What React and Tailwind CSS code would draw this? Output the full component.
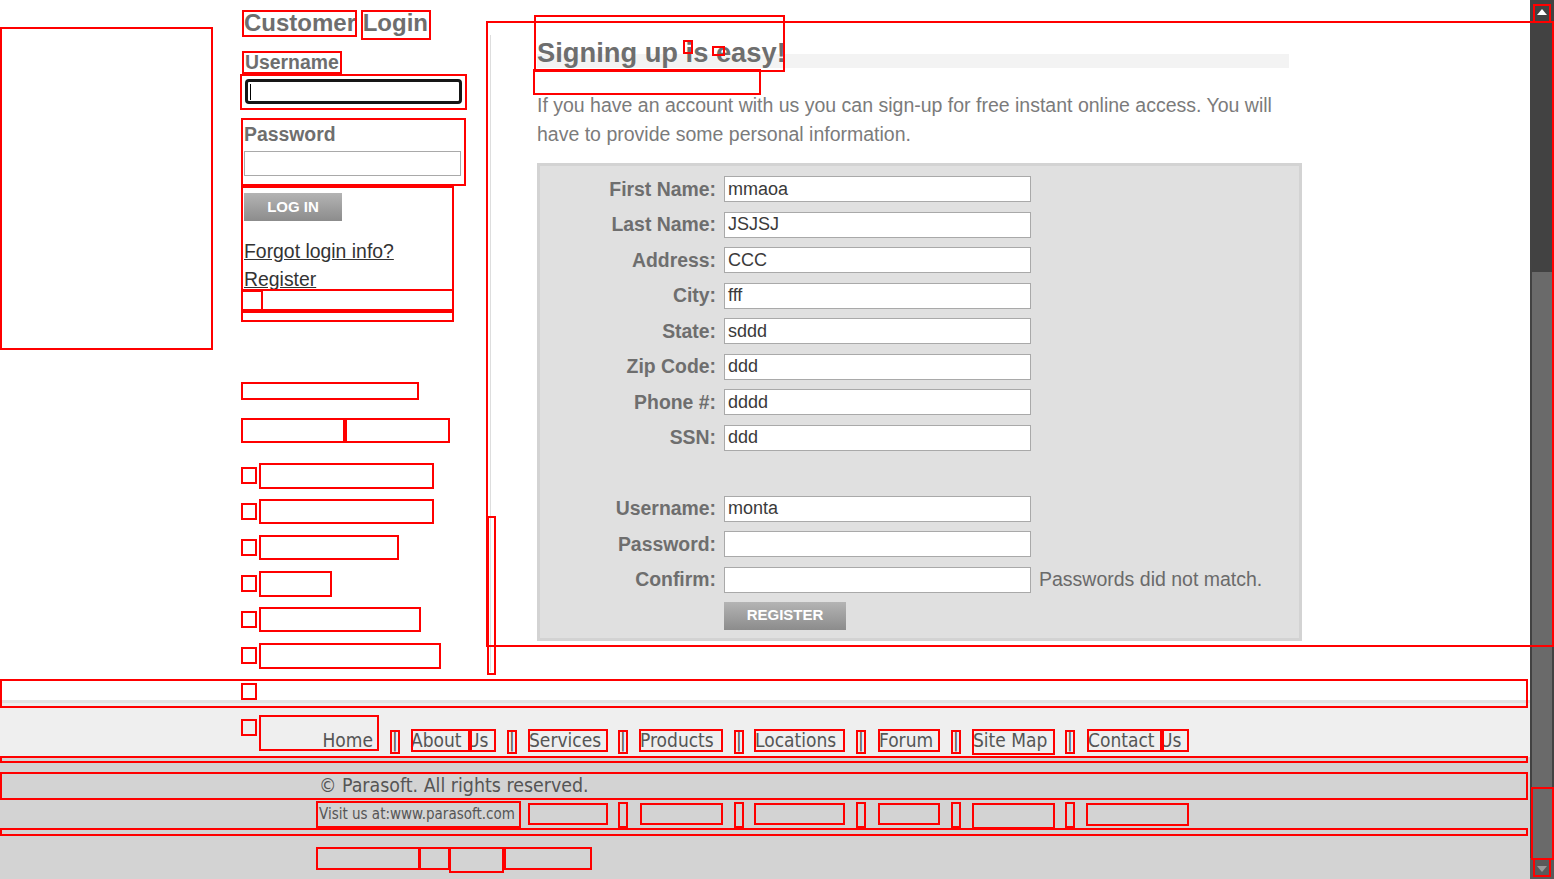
import React from 'react'

const SANS = "font-['Liberation_Sans',Arial,sans-serif]"
const FOOT = "font-['DejaVu_Sans_Condensed','DejaVu_Sans',sans-serif]"

const fields = [
  { label: 'First Name:', value: 'mmaoa' },
  { label: 'Last Name:', value: 'JSJSJ' },
  { label: 'Address:', value: 'CCC' },
  { label: 'City:', value: 'fff' },
  { label: 'State:', value: 'sddd' },
  { label: 'Zip Code:', value: 'ddd' },
  { label: 'Phone #:', value: 'dddd' },
  { label: 'SSN:', value: 'ddd' },
]

const accountFields = [
  { label: 'Username:', value: 'monta' },
  { label: 'Password:', value: '' },
  { label: 'Confirm:', value: '', error: 'Passwords did not match.' },
]

// each link sits after a "|" separator; widths keep the reference spacing
const navLinks = [
  { label: 'About Us', cls: 'ml-[12px] w-[97px]' },
  { label: 'Services', cls: 'ml-[13px] w-[90px]' },
  { label: 'Products', cls: 'ml-[13px] w-[95px]' },
  { label: 'Locations', cls: 'ml-[12px] w-[102px]' },
  { label: 'Forum', cls: 'ml-[14px] w-[73px]' },
  { label: 'Site Map', cls: 'ml-[13px] w-[93px]' },
  { label: 'Contact Us', cls: 'ml-[14px] w-[110px]' },
]

// debug outlines drawn over the page: [x1, y1, x2, y2]
const boxes = [
  [0, 27, 213, 350],
  [242, 10, 357, 37], [361, 10, 431, 40],
  [242, 51, 342, 74],
  [240, 74, 467, 110],
  [241, 118, 466, 186],
  [241, 186, 454, 322],
  [241, 289, 454, 311], [241, 290, 263, 313], [241, 311, 454, 322],
  [241, 382, 419, 400],
  [241, 418, 345, 443], [345, 418, 450, 443],
  [241, 467, 257, 484], [259, 463, 434, 489],
  [241, 503, 257, 520], [259, 499, 434, 524],
  [241, 539, 257, 556], [259, 535, 399, 560],
  [241, 575, 257, 592], [259, 571, 332, 597],
  [241, 611, 257, 628], [259, 607, 421, 632],
  [241, 647, 257, 664], [259, 643, 441, 669],
  [241, 683, 257, 700],
  [241, 719, 257, 736], [259, 715, 379, 751],
  [487, 516, 496, 675],
  [486, 21, 1554, 647],
  [534, 15, 785, 72], [683, 40, 693, 54], [712, 46, 725, 56],
  [533, 69, 761, 95],
  [0, 679, 1528, 708],
  [0, 756, 1528, 763],
  [0, 772, 1528, 800],
  [390, 730, 400, 754], [411, 729, 470, 752], [470, 729, 496, 752],
  [507, 730, 517, 754], [528, 729, 608, 752],
  [618, 730, 628, 754], [639, 729, 723, 752],
  [734, 730, 744, 754], [754, 729, 845, 752],
  [856, 730, 866, 754], [878, 729, 940, 752],
  [951, 730, 961, 754], [972, 729, 1055, 755],
  [1065, 730, 1075, 754], [1087, 729, 1162, 752], [1162, 729, 1189, 752],
  [316, 801, 521, 828], [528, 803, 608, 825],
  [618, 802, 628, 828], [640, 803, 723, 825],
  [734, 802, 744, 828], [754, 803, 845, 825],
  [856, 802, 866, 828], [878, 803, 940, 825],
  [951, 802, 961, 828], [972, 803, 1055, 829],
  [1065, 802, 1075, 828], [1086, 803, 1189, 826],
  [0, 828, 1528, 836],
  [316, 847, 420, 870], [419, 847, 450, 870], [449, 847, 504, 873], [504, 847, 592, 870],
  [1533, 4, 1551, 23], [1531, 787, 1554, 860], [1533, 858, 1551, 877],
]

function FormRow({ label, value, error }) {
  return (
    <div className="flex h-[35.5px] items-center">
      <label className="w-[176px] text-right text-[19.4px] font-bold text-[#6e6e6e]">{label}</label>
      <div className="ml-[8px] flex h-[26px] w-[307px] items-center border border-[#a9a9a9] bg-white pl-[3px] text-[18px] text-[#3a3a3a]">
        {value}
      </div>
      {error && <span className="ml-[8px] text-[19.5px] text-[#6a6a6a]">{error}</span>}
    </div>
  )
}

function Scrollbar() {
  return (
    <div className="flex h-[879px] w-[24px] shrink-0 flex-col bg-[#424242]">
      <div className="flex h-[24px] items-center justify-center">
        <svg width="12" height="8" viewBox="0 0 12 8"><polygon points="6,1 11,7 1,7" fill="#ffffff" /></svg>
      </div>
      <div className="h-[248px]" />
      <div className="mx-[2px] h-[586px] bg-[#6a6a6a]" />
      <div className="flex flex-1 items-center justify-center bg-[#5a5a5a]">
        <svg width="12" height="8" viewBox="0 0 12 8"><polygon points="1,1 11,1 6,7" fill="#9a9a9a" /></svg>
      </div>
    </div>
  )
}

export default function App() {
  return (
    <div className={`relative flex h-[879px] w-[1554px] overflow-hidden bg-white ${SANS}`}>
      <div className="flex w-[1530px] flex-col">
        <div className="flex h-[700px]">
          <div className="w-[244px] shrink-0" />

          <div className="w-[246px] shrink-0 pt-[10px]">
            <h2 className="text-[24px] font-bold leading-[26px] text-[#6e6e6e]">Customer Login</h2>
            <p className="ml-[1px] mt-[15px] text-[19.4px] font-bold leading-[22px] text-[#6e6e6e]">Username</p>
            <div className="ml-[1px] mt-[6px] flex h-[25px] w-[217px] items-center rounded-[4px] border-[3px] border-[#161616] bg-white pl-[2px]">
              <span className="h-[16px] w-[1px] bg-black" />
            </div>
            <p className="mt-[19px] text-[19.4px] font-bold leading-[22px] text-[#6e6e6e]">Password</p>
            <div className="mt-[6px] h-[25px] w-[217px] border border-[#a9a9a9] bg-white" />
            <button className="mt-[17px] flex h-[28px] w-[98px] items-center justify-center bg-gradient-to-b from-[#b4b4b4] to-[#8c8c8c] text-[15px] font-bold text-white">
              LOG IN
            </button>
            <div className="mt-[16px] text-[19.4px] leading-[28px] text-[#333333]">
              <a className="block underline">Forgot login info?</a>
              <a className="block underline">Register</a>
            </div>
          </div>

          <div className="mt-[35px] h-[637px] flex-1 border-l border-[#dddddd] pl-[46px] pt-[2px]">
            <h1 className="h-[31px] w-[752px] bg-[linear-gradient(to_bottom,transparent_17px,#f3f3f3_17px)] text-[27.3px] font-bold leading-[31px] text-[#6e6e6e]">
              Signing up is easy!
            </h1>
            <p className="mt-[22.5px] w-[752px] text-[19.5px] leading-[29px] text-[#7b7b7b]">
              If you have an account with us you can sign-up for free instant online access. You will have to provide some personal information.
            </p>
            <div className="mt-[14.5px] w-[765px] border-[3px] border-[#d3d3d3] bg-[#e0e0e0] pb-[8px] pt-[5.5px]">
              {fields.map((f) => (
                <FormRow key={f.label} {...f} />
              ))}
              <div className="h-[35.5px]" />
              {accountFields.map((f) => (
                <FormRow key={f.label} {...f} />
              ))}
              <button className="ml-[184px] mt-[4px] flex h-[28px] w-[122px] items-center justify-center bg-gradient-to-b from-[#b4b4b4] to-[#8c8c8c] text-[15px] font-bold text-white">
                REGISTER
              </button>
            </div>
          </div>
        </div>

        <footer className={`flex-1 border-t-[3px] border-[#e2e2e2] bg-[#d3d3d3] ${FOOT} text-[#555555]`}>
          <div className="h-[54px] bg-[#efefef] pl-[259px] pt-[26px]">
            <div className="flex h-[22px] items-center text-[19px] leading-[22px]">
              <span className="w-[132px] pr-[18px] text-right">Home</span>
              {navLinks.map((link) => (
                <React.Fragment key={link.label}>
                  <span className="w-[8px] text-center">|</span>
                  <span className={`shrink-0 ${link.cls}`}>{link.label}</span>
                </React.Fragment>
              ))}
            </div>
          </div>
          <p className="pl-[319px] pt-[15px] text-[19.4px] leading-[27px]">© Parasoft. All rights reserved.</p>
          <p className="mt-[3px] pl-[319px] text-[15px] leading-[24px]">Visit us at:www.parasoft.com</p>
        </footer>
      </div>

      <Scrollbar />

      <div className="pointer-events-none absolute inset-0">
        {boxes.map(([x1, y1, x2, y2], i) => (
          <div
            key={i}
            className="absolute border-2 border-[#ff0000]"
            style={{ left: x1, top: y1, width: x2 - x1, height: y2 - y1 }}
          />
        ))}
      </div>
    </div>
  )
}
